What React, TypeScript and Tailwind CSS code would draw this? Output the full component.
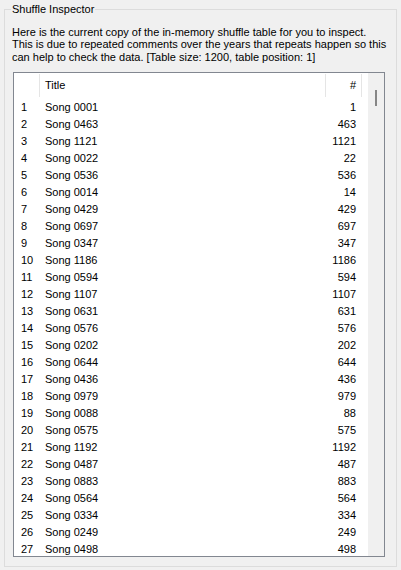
const rows: [number, string][] = [
  [1, "0001"],
  [2, "0463"],
  [3, "1121"],
  [4, "0022"],
  [5, "0536"],
  [6, "0014"],
  [7, "0429"],
  [8, "0697"],
  [9, "0347"],
  [10, "1186"],
  [11, "0594"],
  [12, "1107"],
  [13, "0631"],
  [14, "0576"],
  [15, "0202"],
  [16, "0644"],
  [17, "0436"],
  [18, "0979"],
  [19, "0088"],
  [20, "0575"],
  [21, "1192"],
  [22, "0487"],
  [23, "0883"],
  [24, "0564"],
  [25, "0334"],
  [26, "0249"],
  [27, "0498"],
];

const ShuffleTable = () => {
  return (
    <div className="mt-[9px] ml-[8px] w-[372px] h-[485px] border border-[#828790] bg-white flex overflow-hidden">
      {/* List area */}
      <div className="flex-1 flex flex-col overflow-hidden">
        {/* Header */}
        <div className="flex h-[26px] shrink-0 items-center">
          <div className="w-[25px] h-[23px]" />
          <div className="w-px h-[23px] bg-[#e5e5e5]" />
          <div className="w-[285px] pl-[5px]">Title</div>
          <div className="w-px h-[23px] bg-[#e5e5e5]" />
          <div className="w-[35px] pr-[5px] text-right">#</div>
          <div className="w-px h-[23px] bg-[#e5e5e5]" />
        </div>

        {/* Rows */}
        {rows.map(([pos, id]) => (
          <div key={pos} className="flex h-[17px] shrink-0 items-center">
            <div className="w-[26px] pl-[7px]">{pos}</div>
            <div className="w-[286px] pl-[5px]">Song {id}</div>
            <div className="w-[35px] pr-[5px] text-right">{parseInt(id, 10)}</div>
          </div>
        ))}
      </div>

      {/* Scrollbar */}
      <div className="w-[16px] h-full bg-[#f0f0f0] shrink-0 pt-[17px] pl-[7px]">
        <div className="w-[2px] h-[16px] bg-[#868686]" />
      </div>
    </div>
  );
};

export default function App() {
  return (
    <div
      className="w-[401px] h-[570px] bg-[#f0f0f0] pt-[3px] text-[11px] leading-[13px] text-black"
      style={{ fontFamily: '"Liberation Sans", Arial, sans-serif' }}
    >
      <fieldset className="mx-[4px] h-[564px] border border-[#dcdcdc]">
        <legend className="ml-[6px] px-[1px]">Shuffle Inspector</legend>
        <p className="ml-[7px] mt-[10px] leading-[12.3px]">
          Here is the current copy of the in-memory shuffle table for you to inspect.
          <br />
          This is due to repeated comments over the years that repeats happen so this
          <br />
          can help to check the data. [Table size: 1200, table position: 1]
        </p>
        <ShuffleTable />
      </fieldset>
    </div>
  );
}
